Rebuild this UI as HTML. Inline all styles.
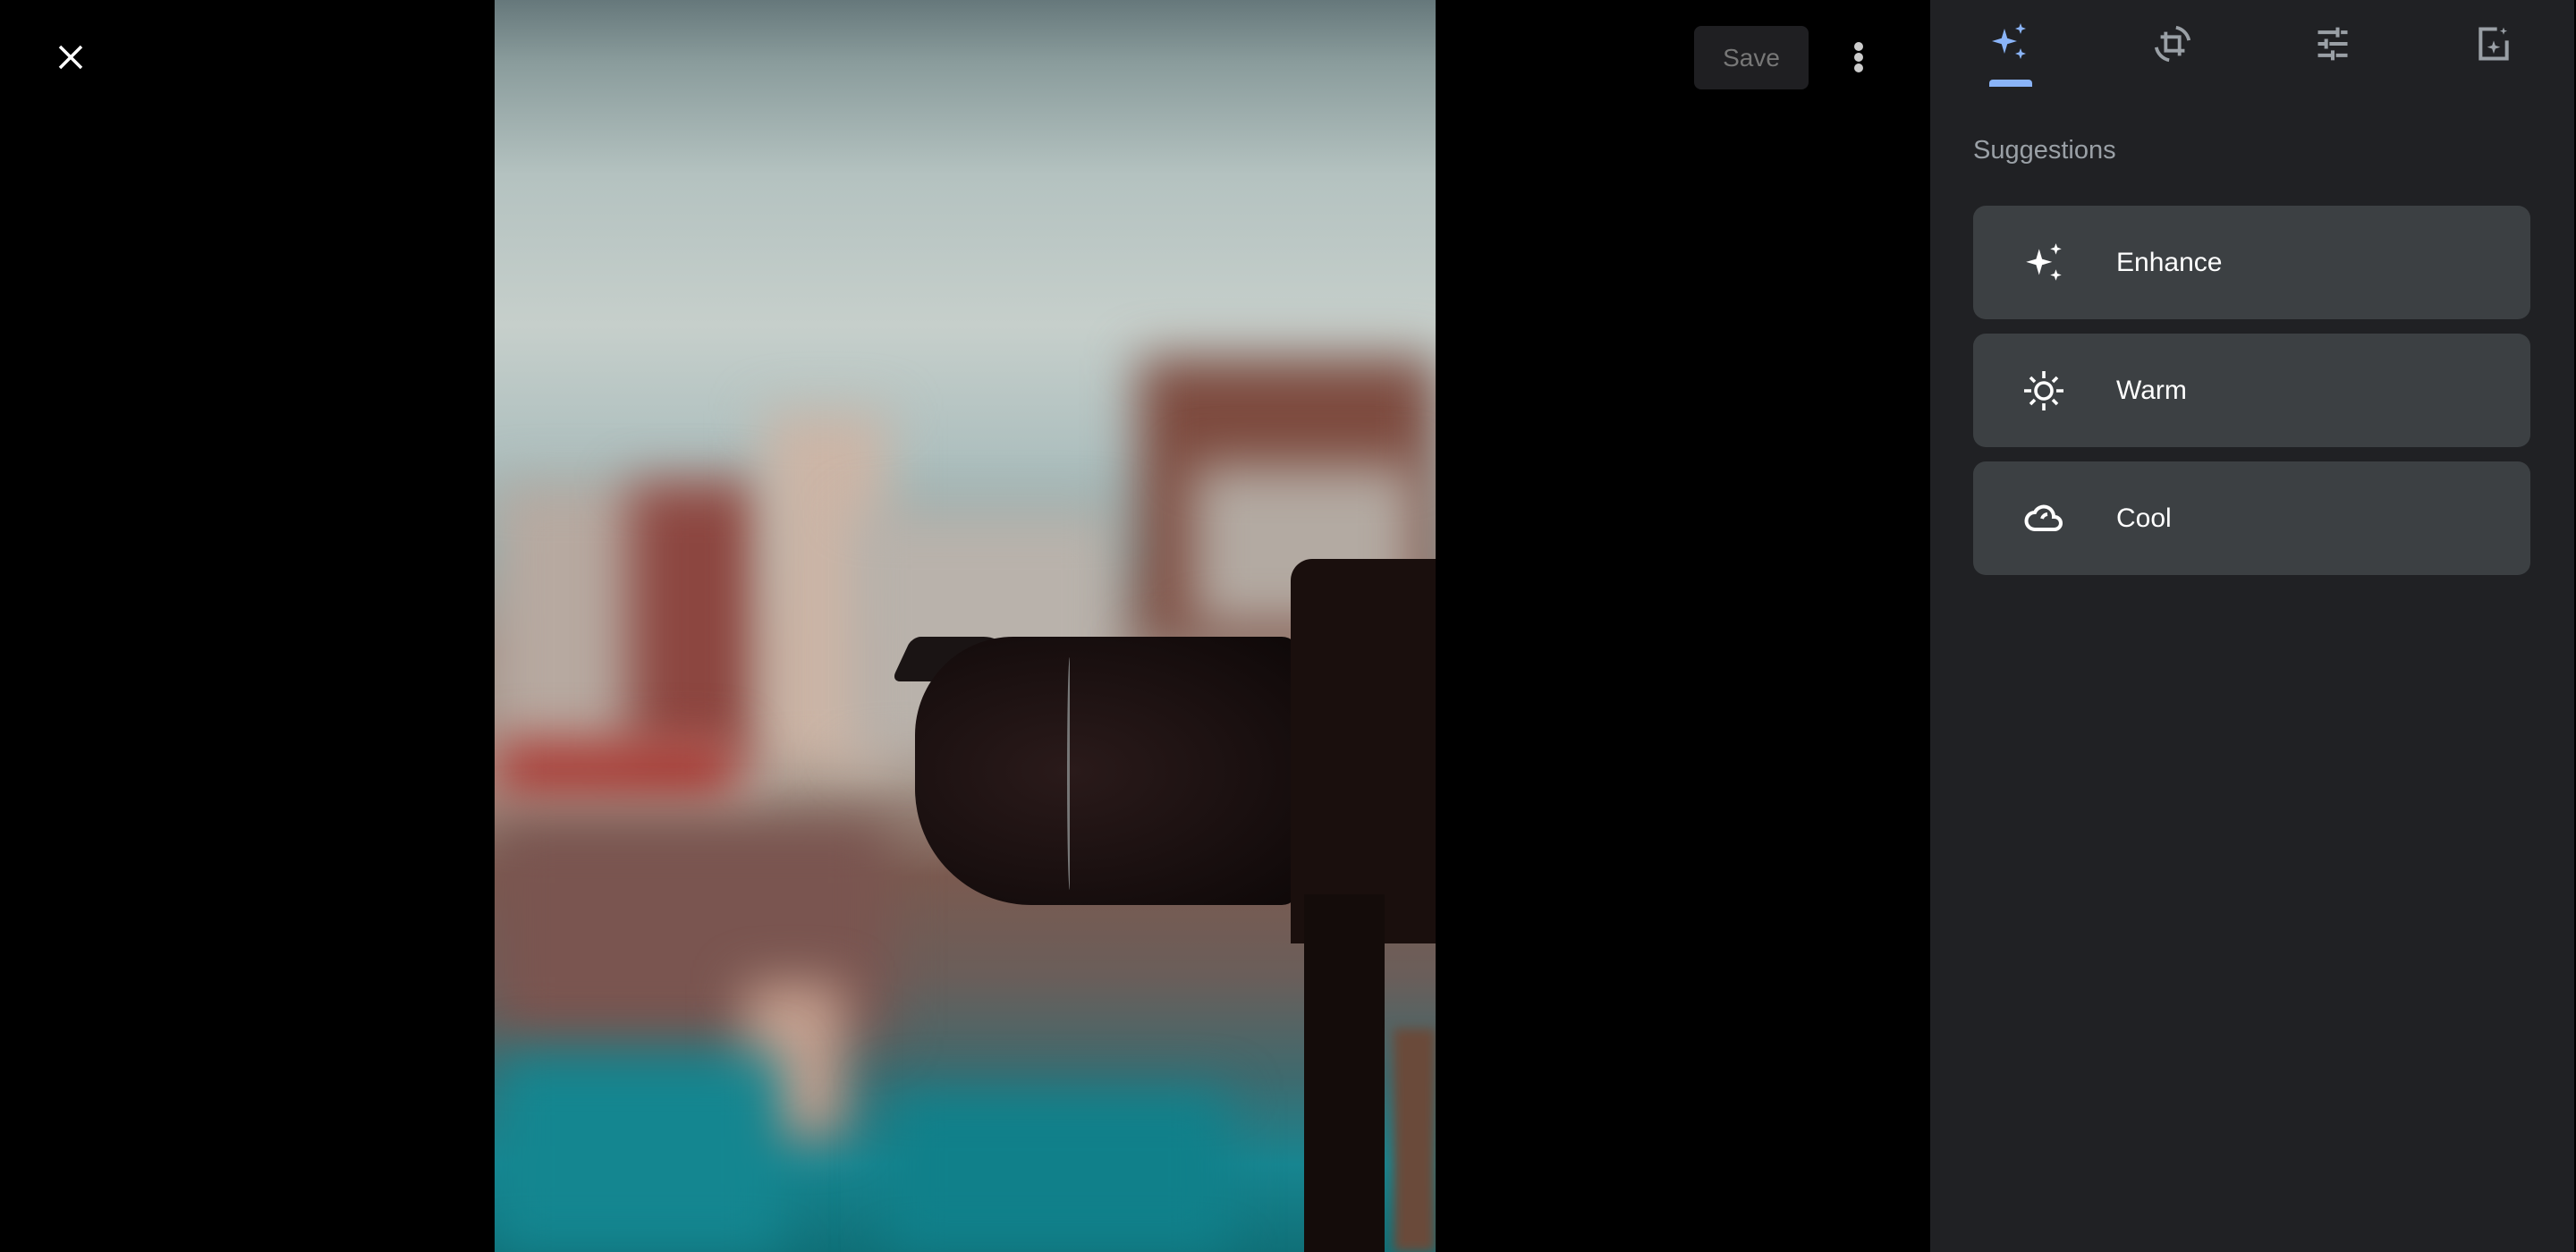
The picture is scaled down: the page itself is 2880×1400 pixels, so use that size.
<!DOCTYPE html>
<html><head><meta charset="utf-8"><style>
*{margin:0;padding:0;box-sizing:border-box}
body{width:2880px;height:1400px;background:#000;overflow:hidden;position:relative;font-family:"Liberation Sans",sans-serif}
.photo{position:absolute;left:553px;top:0;width:1052px;height:1400px;overflow:hidden;
background:linear-gradient(180deg,#66787b 0%,#8a9c9c 5%,#b4c2c0 14%,#c6cfcb 26%,#afc0bf 36%,#93abab 44%,#a09088 52%,#a5968b 62%,#7a5a50 70%,#6a5e5a 78%,#3f6a6e 86%,#178590 93%,#107078 100%)}
.b{position:absolute;filter:blur(28px)}
.panel{position:absolute;left:2158px;top:0;width:720px;height:1400px;background:#202124}
.card{position:absolute;left:48px;width:623px;height:127px;background:#3c4043;border-radius:14px}
.card span{position:absolute;left:160px;top:47px;color:#fff;font-size:30px}
.card svg{position:absolute;left:55px;top:40px}
</style></head><body>
<div class="photo">
 <div class="b" style="left:0;top:540px;width:300px;height:360px;background:#b7a9a0"></div>
 <div class="b" style="left:150px;top:540px;width:150px;height:300px;background:#8c4640"></div>
 <div class="b" style="left:300px;top:460px;width:140px;height:400px;background:#ccb5a6"></div>
 <div class="b" style="left:400px;top:570px;width:300px;height:280px;background:#b9b2ab"></div>
 <div class="b" style="left:720px;top:400px;width:332px;height:320px;background:#7d4a3e"></div>
 <div class="b" style="left:780px;top:520px;width:250px;height:180px;background:#b3aaa2"></div>
 <div class="b" style="left:0;top:830px;width:270px;height:60px;background:#a8302a"></div>
 <div class="b" style="left:0;top:920px;width:440px;height:240px;background:#7a5550"></div>
 <div class="b" style="left:280px;top:1100px;width:110px;height:170px;background:#c6a08f"></div>
 <div class="b" style="left:0;top:1180px;width:320px;height:220px;background:#148690"></div>
 <div class="b" style="left:440px;top:1220px;width:380px;height:180px;background:#10808a"></div>
 <div style="position:absolute;left:455px;top:712px;width:120px;height:50px;background:#1a1414;border-radius:10px 40px 10px 10px;transform:skewX(-25deg)"></div>
 <div style="position:absolute;left:470px;top:712px;width:430px;height:300px;border-radius:110px 20px 20px 130px;background:radial-gradient(ellipse at 40% 50%,#2a1a1a,#0e0808)"></div>
 <div style="position:absolute;left:640px;top:735px;width:6px;height:260px;border-radius:50%;border-left:3px solid #777"></div>
 <div style="position:absolute;left:890px;top:625px;width:162px;height:430px;background:#1a0f0d;border-radius:24px 0 0 0"></div>
 <div style="position:absolute;left:905px;top:1000px;width:90px;height:400px;background:#140c0a"></div>
 <div style="position:absolute;left:1005px;top:1150px;width:47px;height:250px;background:#6a4a3a;filter:blur(6px)"></div>
</div>
<svg style="position:absolute;left:64px;top:49px" width="30" height="30" viewBox="0 0 30 30"><path d="M3 3L27 27M27 3L3 27" stroke="#fff" stroke-width="3.5"/></svg>
<div style="position:absolute;left:1894px;top:29px;width:128px;height:71px;background:#1f1f22;border-radius:8px;color:#777;font-size:28px;text-align:center;line-height:71px">Save</div>
<div style="position:absolute;left:2073px;top:47px;width:10px;height:10px;border-radius:5px;background:#ccc"></div>
<div style="position:absolute;left:2073px;top:59px;width:10px;height:10px;border-radius:5px;background:#ccc"></div>
<div style="position:absolute;left:2073px;top:71px;width:10px;height:10px;border-radius:5px;background:#ccc"></div>
<div style="position:absolute;left:2876px;top:0;width:2px;height:320px;background:#888"></div>
<div class="panel">
 <svg style="position:absolute;left:65px;top:24px" width="48" height="48" viewBox="0 0 24 24"><path fill="#8ab4f8" d="M9 4l1.6 5.4L16 11l-5.4 1.6L9 18l-1.6-5.4L2 11l5.4-1.6zM18 1l.8 2.2L21 4l-2.2.8L18 7l-.8-2.2L15 4l2.2-.8zM18 15l.8 2.2L21 18l-2.2.8L18 21l-.8-2.2L15 18l2.2-.8z"/></svg>
 <div style="position:absolute;left:66px;top:89px;width:48px;height:8px;background:#8ab4f8;border-radius:4px 4px 0 0"></div>
 <svg style="position:absolute;left:248px;top:26px" width="46" height="46" viewBox="0 0 24 24" fill="none" stroke="#9aa0a6" stroke-width="2"><path d="M8 5v11h11M5 8h11v11"/><path d="M14 2.5A9.5 9.5 0 0 1 21.5 10M10 21.5A9.5 9.5 0 0 1 2.5 14"/></svg>
 <svg style="position:absolute;left:428px;top:27px" width="44" height="44" viewBox="0 0 24 24" fill="none" stroke="#9aa0a6" stroke-width="2.2"><path d="M3 5h11M17 5h4M15 2v6M3 12h4M10 12h11M8 9v6M3 19h8M14 19h7M12 16v6"/></svg>
 <svg style="position:absolute;left:608px;top:27px" width="44" height="44" viewBox="0 0 24 24" fill="none" stroke="#9aa0a6" stroke-width="2.2"><path d="M14 3H4v18h16V10"/><path fill="#9aa0a6" stroke="none" d="M12 10l1 3 3 1-3 1-1 3-1-3-3-1 3-1zM18 2l.6 1.6 1.6.6-1.6.6L18 6.4l-.6-1.6-1.6-.6 1.6-.6z"/></svg>
 <div style="position:absolute;left:48px;top:152px;color:#9aa0a6;font-size:29px">Suggestions</div>
 <div class="card" style="top:230px"><svg width="50" height="50" viewBox="0 0 24 24"><path fill="#fff" d="M9 4l1.6 5.4L16 11l-5.4 1.6L9 18l-1.6-5.4L2 11l5.4-1.6zM18 1l.8 2.2L21 4l-2.2.8L18 7l-.8-2.2L15 4l2.2-.8zM18 15l.8 2.2L21 18l-2.2.8L18 21l-.8-2.2L15 18l2.2-.8z"/></svg><span>Enhance</span></div>
 <div class="card" style="top:373px"><svg width="48" height="48" viewBox="0 0 24 24" fill="none" stroke="#fff" stroke-width="1.8"><circle cx="12" cy="12" r="4.5"/><path d="M12 1v4M12 19v4M1 12h4M19 12h4M4.5 4.5l2.5 2.5M17 17l2.5 2.5M4.5 19.5L7 17M17 7l2.5-2.5"/></svg><span>Warm</span></div>
 <div class="card" style="top:516px"><svg width="48" height="48" viewBox="0 0 24 24" fill="none" stroke="#fff" stroke-width="2"><path d="M7 18h11a3.5 3.5 0 0 0 0-7h-.5A5.5 5.5 0 0 0 7 8.5 4.7 4.7 0 0 0 7 18z"/><path d="M11 12a3.5 3.5 0 0 1 3-2.5"/></svg><span>Cool</span></div>
</div>
</body></html>
